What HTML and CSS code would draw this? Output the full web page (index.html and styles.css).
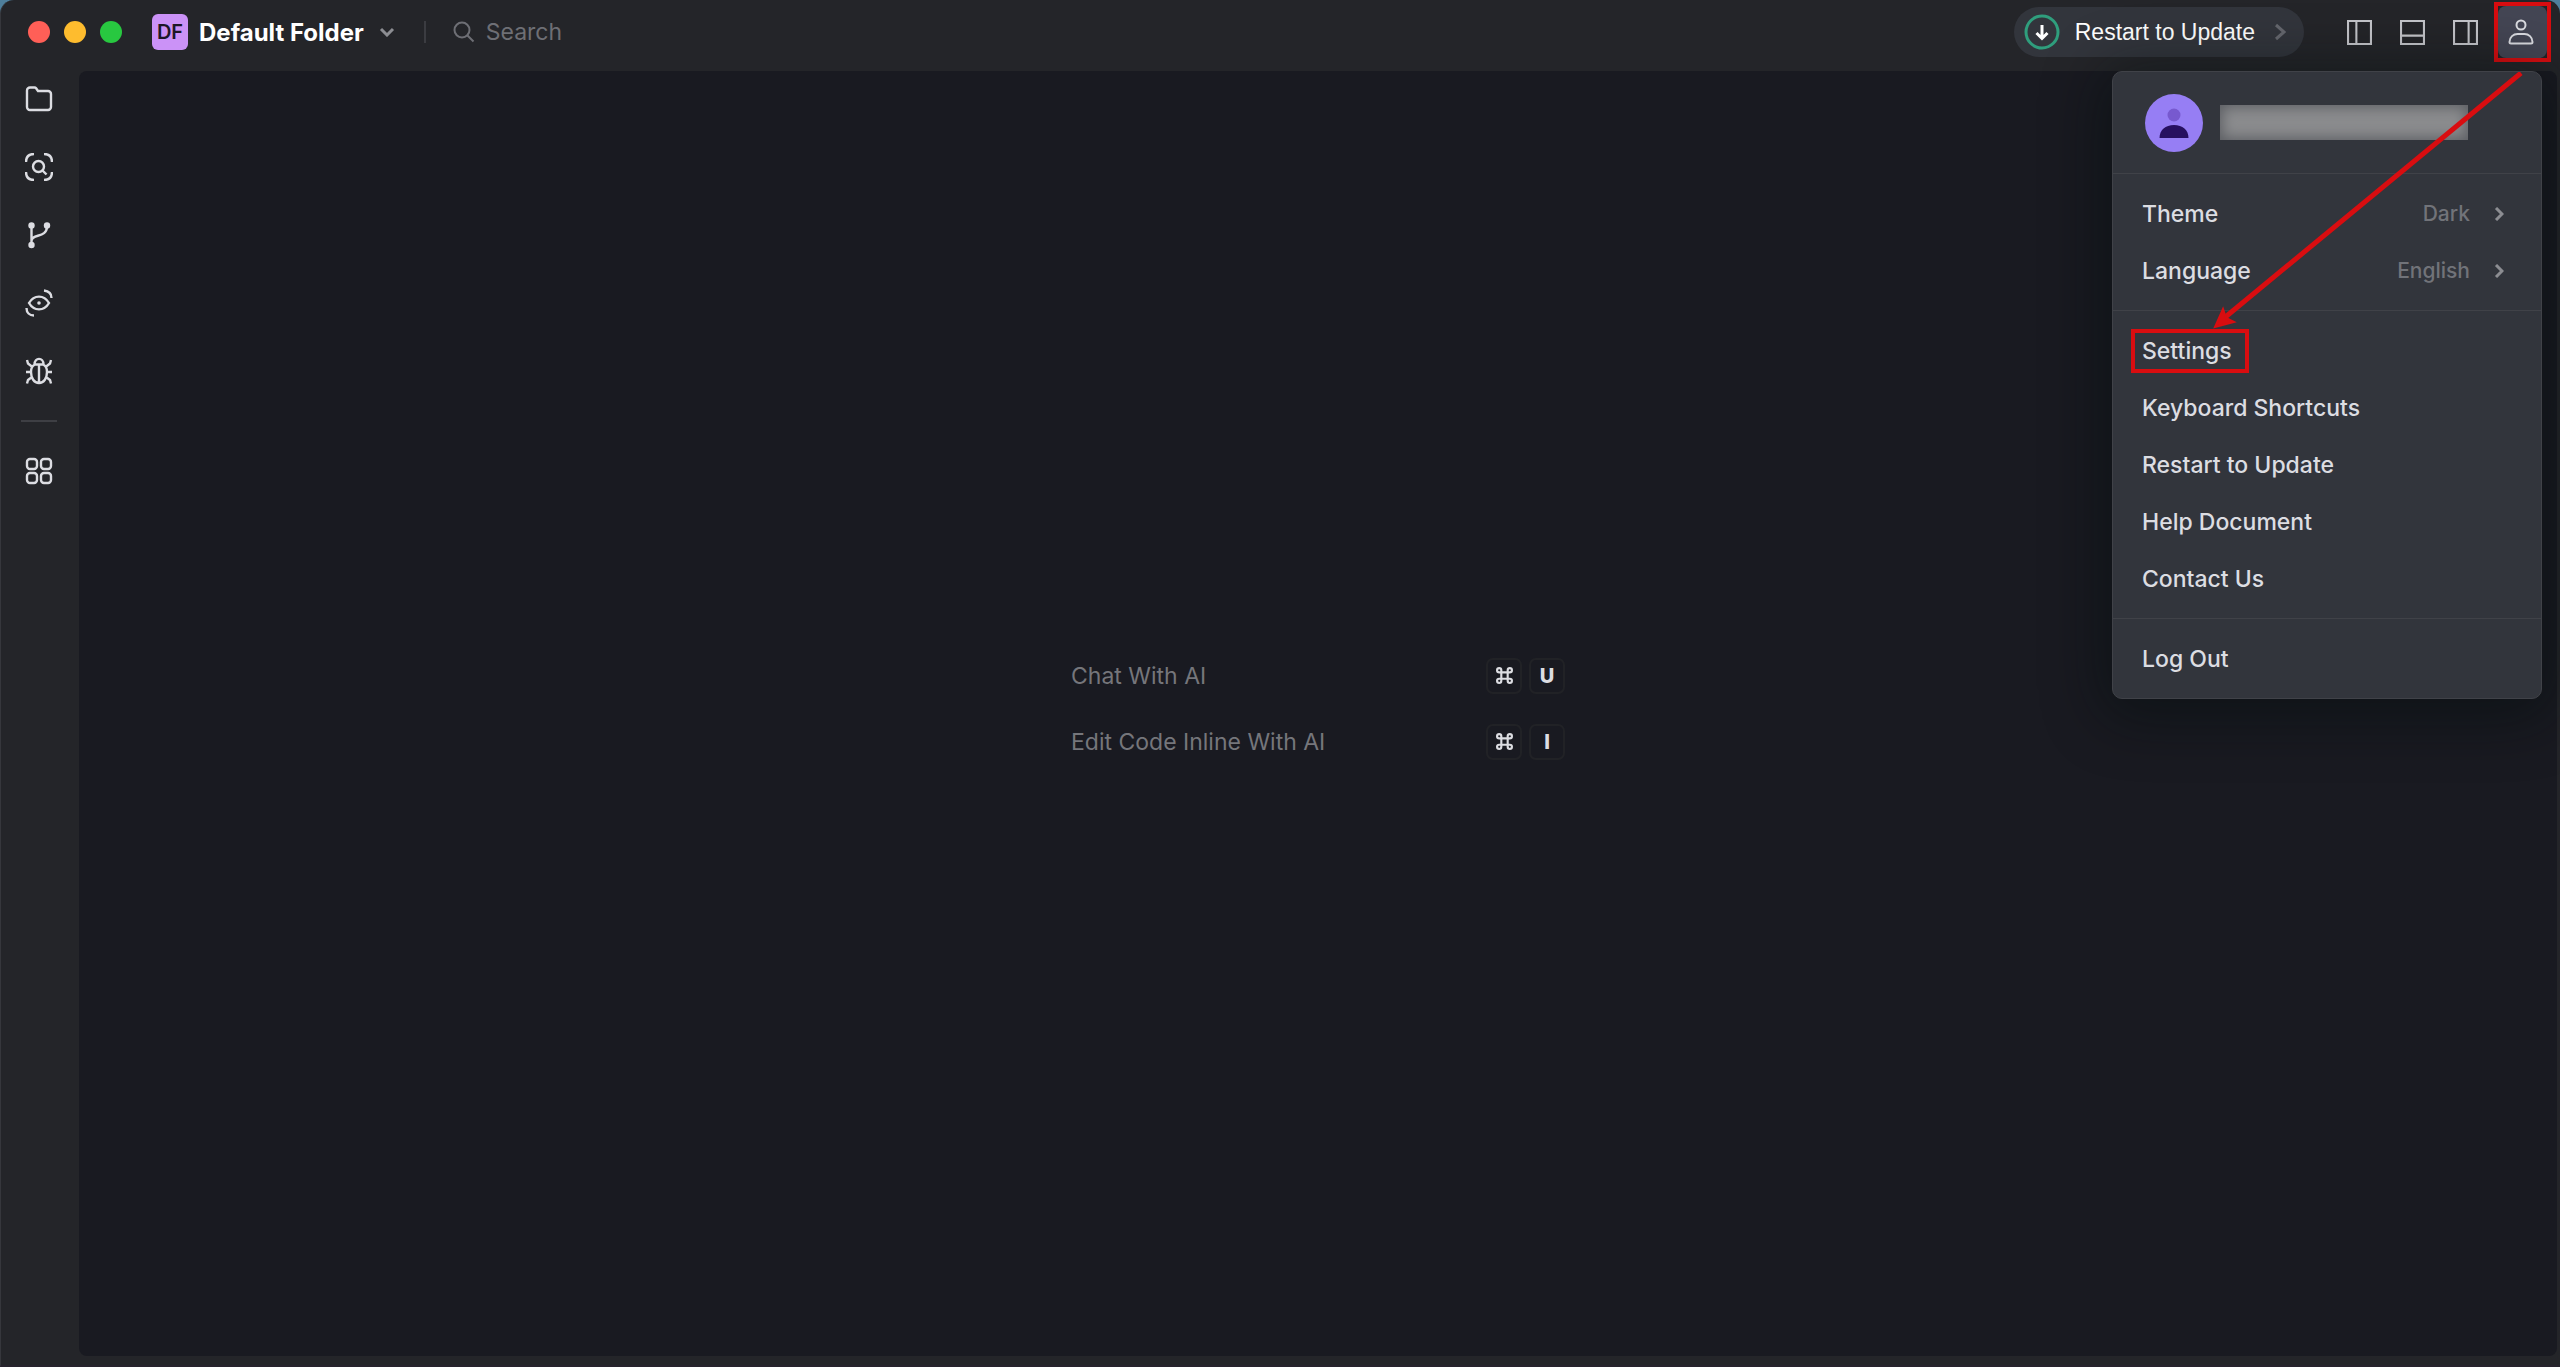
FILE: index.html
```html
<!DOCTYPE html>
<html lang="en">
<head>
    <meta charset="UTF-8">
    <meta name="viewport" content="width=device-width, initial-scale=1.0">
    <title>Default Folder</title>
    <link rel="stylesheet" href="styles.css">
</head>
<body>
    <div class="window">
        <header class="titlebar">
            <div class="lights">
                <span class="light red"></span>
                <span class="light yellow"></span>
                <span class="light green"></span>
            </div>
            <button class="project">
                <span class="badge">DF</span>
                <span>Default Folder</span>
                <svg class="chevron-down" viewBox="0 0 16 10"><path d="M2 2l6 6 6-6"/></svg>
            </button>
            <span class="divider"></span>
            <label class="search">
                <svg viewBox="0 0 22 22"><circle cx="9" cy="9" r="7.5"/><path d="M14.5 14.5l6 6"/></svg>
                <input type="text" placeholder="Search" aria-label="Search">
            </label>
            <button class="update">
                <svg class="update-icon" viewBox="0 0 36 36"><circle cx="18" cy="18" r="16"/><path d="M18 11v13M12.500 19l5.500 5.500 5.500-5.500"/></svg>
                <span>Restart to Update</span>
                <svg class="update-arrow" viewBox="0 0 12 18"><path d="M2 2l8 7-8 7"/></svg>
            </button>
            <div class="layout-buttons">
                <button class="icon-button" aria-label="Toggle left panel">
                    <svg viewBox="0 0 24 24"><path d="M1 1h22v22H1zM9 1v22"/></svg>
                </button>
                <button class="icon-button" aria-label="Toggle bottom panel">
                    <svg viewBox="0 0 24 24"><path d="M1 1h22v22H1zM1 15h22"/></svg>
                </button>
                <button class="icon-button" aria-label="Toggle right panel">
                    <svg viewBox="0 0 24 24"><path d="M1 1h22v22H1zM15 1v22"/></svg>
                </button>
            </div>
            <div class="account-frame">
                <button class="account" aria-label="Account">
                    <svg viewBox="0 0 26 26"><circle cx="13" cy="6" r="4.500"/><path d="M3 24.500h20a1.500 1.500 0 0 0 1.500-1.500c0-5-4-8-8-8h-7c-4 0-8 3-8 8a1.500 1.500 0 0 0 1.500 1.500z"/></svg>
                </button>
            </div>
        </header>

        <nav class="sidebar">
            <button class="side-button" aria-label="Explorer">
                <svg viewBox="0 0 28 28"><path d="M2 5.500a3 3 0 0 1 3-3h4.500a2 2 0 0 1 1.600.8L13 6h10a3 3 0 0 1 3 3v13a3 3 0 0 1-3 3H5a3 3 0 0 1-3-3z"/></svg>
            </button>
            <button class="side-button" aria-label="Search files">
                <svg viewBox="0 0 28 28"><path d="M1 9c0-5 3-8 8-8M19 1c5 0 8 3 8 8M27 19c0 5-3 8-8 8M9 27c-5 0-8-3-8-8"/><circle cx="13.500" cy="13.500" r="5.500"/><path d="M17.500 17.500l4 4"/></svg>
            </button>
            <button class="side-button" aria-label="Source control">
                <svg viewBox="0 0 28 28"><g class="solid"><circle cx="6.500" cy="4.500" r="3.200"/><circle cx="22" cy="4.500" r="3.200"/><circle cx="6.500" cy="24" r="3.200"/></g><path d="M6.500 4.500V24M6.500 20c0-8 15.500-2 15.500-15"/></svg>
            </button>
            <button class="side-button" aria-label="Preview">
                <svg viewBox="0 0 28 28"><path d="M4 14c5-8.500 15-8.500 20 0-5 8.500-15 8.500-20 0zM19 1.500c4.500.5 7.500 3 7.500 7.500M1.500 19c0 4.500 3 7.500 7.500 7.500"/><circle class="solid" cx="14" cy="14" r="1.800"/></svg>
            </button>
            <button class="side-button" aria-label="Debug">
                <svg viewBox="0 0 28 28"><path d="M10 7.500h8c2.500 1 4 4 4 7.500 0 6-3 11-8 11s-8-5-8-11c0-3.500 1.500-6.500 4-7.500zM14 8v18M9.500 7.500c0-7.500 9-7.500 9 0M2 3l1 3.500L7.500 10M26 3l-1 3.500-4.500 3.500M1 15h5M27 15h-5M2 26.500l1-3.500 4-3M26 26.500l-1-3.500-4-3"/></svg>
            </button>
            <hr>
            <button class="side-button" aria-label="Extensions">
                <svg viewBox="0 0 28 28"><rect x="2" y="2" width="10" height="10" rx="3"/><rect x="16" y="2" width="10" height="10" rx="3"/><rect x="2" y="16" width="10" height="10" rx="3"/><rect x="16" y="16" width="10" height="10" rx="3"/></svg>
            </button>
        </nav>

        <main class="editor">
            <dl class="shortcuts">
                <div class="shortcut">
                    <dt>Chat With AI</dt>
                    <dd><kbd><svg viewBox="0 0 16 16"><path d="M5 5h6v6H5zM5 5H3a2 2 0 1 1 2-2zM11 5V3a2 2 0 1 1 2 2zM11 11h2a2 2 0 1 1-2 2zM5 11v2a2 2 0 1 1-2-2z"/></svg></kbd><kbd>U</kbd></dd>
                </div>
                <div class="shortcut">
                    <dt>Edit Code Inline With AI</dt>
                    <dd><kbd><svg viewBox="0 0 16 16"><path d="M5 5h6v6H5zM5 5H3a2 2 0 1 1 2-2zM11 5V3a2 2 0 1 1 2 2zM11 11h2a2 2 0 1 1-2 2zM5 11v2a2 2 0 1 1-2-2z"/></svg></kbd><kbd>I</kbd></dd>
                </div>
            </dl>
        </main>

        <div class="menu">
            <div class="menu-user">
                <svg class="avatar" viewBox="0 0 58 58"><circle cx="29" cy="29" r="29" fill="#967ef4"/><circle cx="29" cy="21" r="6.500" fill="#7759cf"/><path d="M14.500 44c0-8 6-13 14.500-13s14.500 5 14.500 13z" fill="#271060"/></svg>
                <span class="user-name"></span>
            </div>
            <div class="menu-group">
                <button class="menu-item"><span>Theme</span><span class="value">Dark</span><svg viewBox="0 0 10 14"><path d="M2 1l6 6-6 6"/></svg></button>
                <button class="menu-item"><span>Language</span><span class="value">English</span><svg viewBox="0 0 10 14"><path d="M2 1l6 6-6 6"/></svg></button>
            </div>
            <div class="menu-group">
                <button class="menu-item"><span class="marked">Settings</span></button>
                <button class="menu-item">Keyboard Shortcuts</button>
                <button class="menu-item">Restart to Update</button>
                <button class="menu-item">Help Document</button>
                <button class="menu-item">Contact Us</button>
            </div>
            <div class="menu-group">
                <button class="menu-item">Log Out</button>
            </div>
            <svg class="arrow" viewBox="0 0 312 258"><path class="shaft" d="M308 1L10 247"/><path class="head" d="M2 255L10 237l3 9 8 4z"/></svg>
        </div>
    </div>
</body>
</html>
```

FILE: styles.css
```css
* {
    box-sizing: border-box;
}
body {
    margin: 0;
    background: #4e7f9c;
    font-family: Inter, "Liberation Sans", sans-serif;
    font-size: 23px;
    color: #dcdde2;
}
button {
    margin: 0;
    padding: 0;
    border: none;
    background: none;
    color: inherit;
    font: inherit;
    cursor: pointer;
}
svg {
    display: block;
    flex: none;
    fill: none;
    stroke: currentColor;
    stroke-width: 2;
}
.window {
    position: relative;
    display: grid;
    grid-template-columns: 78px 1fr;
    grid-template-rows: 71px 1fr;
    min-height: 100vh;
    padding: 0 3px 9px 0;
    border-left: 1px solid #36373c;
    border-bottom: 2px solid #27232d;
    border-radius: 14px 14px 0 0;
    background: #242529;
}

/* title bar */
.titlebar {
    grid-column: 1 / 3;
    display: flex;
    align-items: center;
    padding: 0 6px 7px 27px;
}
.lights {
    display: flex;
    gap: 14px;
    margin-right: 30px;
}
.light {
    width: 22px;
    height: 22px;
    border-radius: 50%;
}
.red {
    background: #ff5f57;
}
.yellow {
    background: #febc2e;
}
.green {
    background: #28c840;
}
.project {
    display: flex;
    align-items: center;
    gap: 11px;
    color: white;
    font-size: 24px;
    font-weight: 700;
}
.badge {
    width: 36px;
    line-height: 36px;
    border-radius: 6px;
    background: #cb92f7;
    color: #1d1727;
    font-size: 20px;
    font-weight: 600;
}
.chevron-down {
    width: 16px;
    height: 10px;
    margin-left: 4px;
    color: #8c8d92;
    stroke-width: 3;
}
.divider {
    width: 2px;
    height: 22px;
    margin: 0 27px 0 29px;
    background: #3b3c41;
}
.search {
    display: flex;
    align-items: center;
    gap: 11px;
    flex: 1;
    color: #6e6f75;
}
.search svg {
    width: 22px;
    height: 22px;
}
.search input {
    flex: 1;
    min-width: 0;
    padding: 0;
    border: none;
    outline: none;
    background: none;
    color: white;
    font: inherit;
}
.search input::placeholder {
    color: #6e6f75;
}
.update {
    display: flex;
    align-items: center;
    gap: 15px;
    height: 50px;
    padding: 0 18px 0 10px;
    border-radius: 25px;
    background: #32353c;
    color: white;
    font-family: "Liberation Sans", Arial, sans-serif;
}
.update-icon {
    width: 36px;
    height: 36px;
    stroke-width: 3;
}
.update-icon circle {
    stroke: #2f9e7d;
}
.update-arrow {
    width: 12px;
    height: 18px;
    margin-left: 4px;
    color: #65676e;
    stroke-width: 3;
}
.layout-buttons {
    display: flex;
    gap: 28px;
    margin: 0 16px 0 43px;
}
.icon-button svg {
    width: 25px;
    height: 25px;
    color: #c4c5ca;
}
.account-frame {
    border: 4px solid #d90d10;
}
.account {
    display: flex;
    align-items: center;
    justify-content: center;
    width: 49px;
    height: 52px;
    padding-right: 3px;
    border-radius: 8px;
    background: #444654;
}
.account svg {
    width: 26px;
    height: 26px;
}

/* activity bar */
.sidebar {
    display: flex;
    flex-direction: column;
    align-items: center;
    gap: 40px;
    padding: 14px 2px 0 0;
}
.side-button svg {
    width: 28px;
    height: 28px;
    stroke-width: 2.4;
}
.side-button .solid {
    fill: currentColor;
    stroke: none;
}
.sidebar hr {
    width: 36px;
    height: 2px;
    margin: -5px 0;
    border: none;
    background: #3e3f44;
}

/* empty editor */
.editor {
    display: flex;
    align-items: center;
    justify-content: center;
    padding-bottom: 10px;
    border-radius: 8px;
    background: #191a21;
}
.shortcuts {
    display: grid;
    gap: 30px;
    width: 494px;
    margin: 0;
    color: #75767b;
}
.shortcut {
    display: flex;
    align-items: center;
    justify-content: space-between;
}
.shortcut dd {
    display: flex;
    gap: 7px;
    margin: 0;
}
kbd {
    display: flex;
    align-items: center;
    justify-content: center;
    width: 36px;
    height: 36px;
    border: 2px solid #212226;
    border-radius: 7px;
    color: #dcdde2;
    font-family: inherit;
    font-size: 20px;
    font-weight: 800;
}
kbd svg {
    width: 17px;
    height: 17px;
}

/* account menu */
.menu {
    position: absolute;
    top: 71px;
    right: 18px;
    width: 430px;
    border: 1px solid #404248;
    border-radius: 10px;
    background: #32353c;
    box-shadow: 0 8px 60px 10px rgba(0, 10, 10, 0.45);
    font-weight: 500;
}
.menu-user {
    display: flex;
    align-items: center;
    gap: 17px;
    height: 101px;
    padding-left: 32px;
}
.avatar {
    width: 58px;
    height: 58px;
    stroke: none;
}
.user-name {
    width: 248px;
    height: 35px;
    background: #8b8c8e;
    box-shadow: inset 0 0 14px 2px #5b5d62;
}
.menu-group {
    padding: 11px 0;
    border-top: 1px solid #404248;
}
.menu-item {
    display: flex;
    align-items: center;
    gap: 24px;
    width: 100%;
    height: 57px;
    padding: 0 37px 0 29px;
}
.menu-item svg {
    width: 10px;
    height: 14px;
    color: #8c8d92;
    stroke-width: 3;
}
.value {
    margin-left: auto;
    color: #717379;
    font-size: 21px;
}
.marked {
    margin-left: -11px;
    padding: 4px 13px 4px 7px;
    border: 4px solid #d90d10;
}
.arrow {
    position: absolute;
    top: 0;
    left: 100px;
    width: 312px;
    height: 258px;
    pointer-events: none;
}
.shaft {
    stroke: #d90d10;
    stroke-width: 5;
}
.head {
    fill: #d90d10;
    stroke: #d90d10;
}
```
